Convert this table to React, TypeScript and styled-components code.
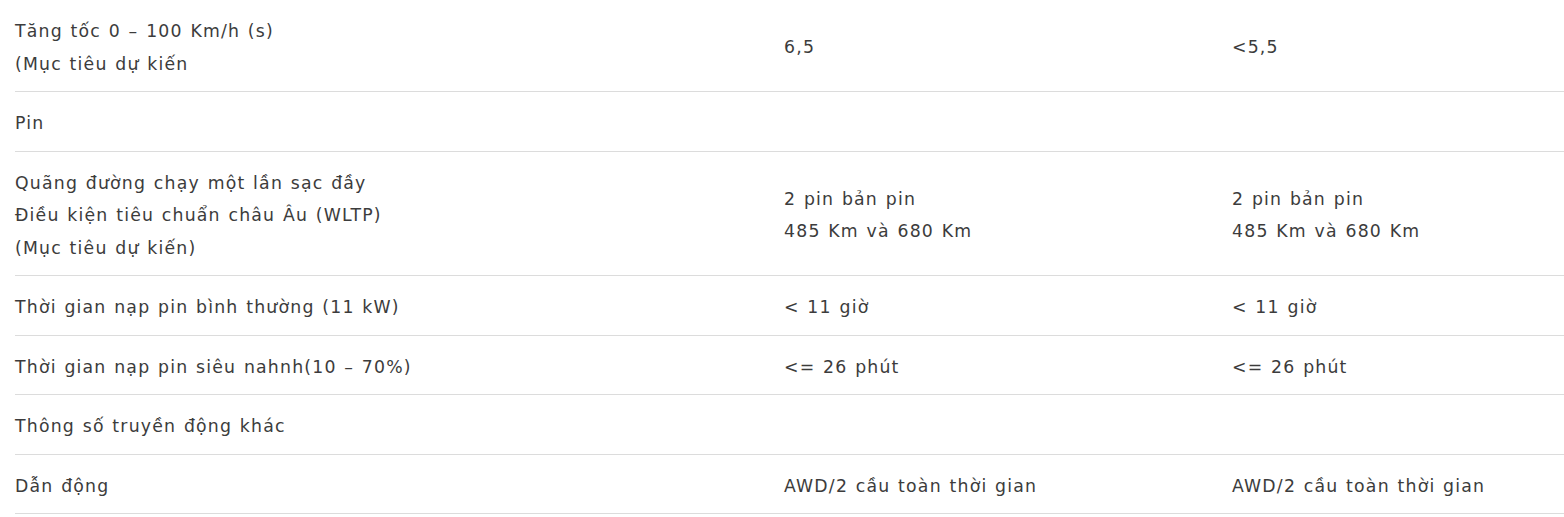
import styled, { createGlobalStyle } from "styled-components";

const GlobalStyle = createGlobalStyle`
  body {
    margin: 0;
    background: #fff;
    font-family: "DejaVu Sans", "Open Sans", sans-serif;
    color: #3c3c3c;
  }
`;

const Table = styled.div`
  display: flex;
  flex-direction: column;
  padding-left: 15px;
`;

const Row = styled.div`
  display: grid;
  grid-template-columns: 769px 448px 1fr;
  align-items: center;
  padding: 15px 0 11px;
  border-bottom: 1px solid #dcdcdc;
`;

const Cell = styled.div`
  font-size: 17.3px;
  line-height: 32.5px;
  letter-spacing: 1.2px;
  word-spacing: 1px;
  white-space: pre-line;
`;

type Spec = { label: string; a?: string; b?: string };

const specs: Spec[] = [
  { label: "Tăng tốc 0 – 100 Km/h (s)\n(Mục tiêu dự kiến", a: "6,5", b: "<5,5" },
  { label: "Pin" },
  {
    label:
      "Quãng đường chạy một lần sạc đầy\nĐiều kiện tiêu chuẩn châu Âu (WLTP)\n(Mục tiêu dự kiến)",
    a: "2 pin bản pin\n485 Km và 680 Km",
    b: "2 pin bản pin\n485 Km và 680 Km",
  },
  { label: "Thời gian nạp pin bình thường (11 kW)", a: "< 11 giờ", b: "< 11 giờ" },
  { label: "Thời gian nạp pin siêu nahnh(10 – 70%)", a: "<= 26 phút", b: "<= 26 phút" },
  { label: "Thông số truyền động khác" },
  { label: "Dẫn động", a: "AWD/2 cầu toàn thời gian", b: "AWD/2 cầu toàn thời gian" },
];

const App = () => {
  return (
    <>
      <GlobalStyle />
      <Table>
        {specs.map((s) => (
          <Row key={s.label}>
            <Cell>{s.label}</Cell>
            <Cell>{s.a ?? ""}</Cell>
            <Cell>{s.b ?? ""}</Cell>
          </Row>
        ))}
      </Table>
    </>
  );
};

export default App;
